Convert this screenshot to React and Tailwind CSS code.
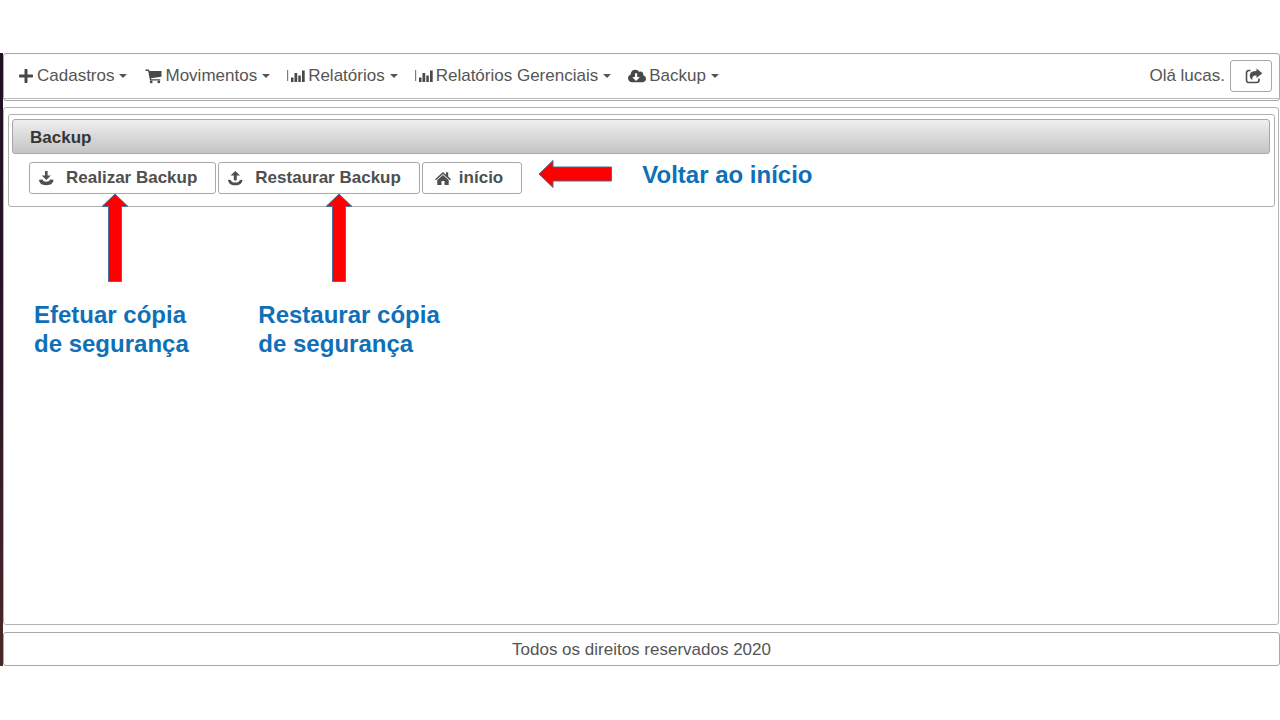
import React from "react";
import { FaPlus, FaCloudDownloadAlt } from "react-icons/fa";

function CartIcon() {
  return (
    <svg width="17" height="16" viewBox="0 0 17 16" fill="currentColor" aria-hidden="true">
      <path d="M0.500 1.500h3.400l.6 1.500H16.500v5.800L6 10.200l.2 1.100h9v1.300H5L3.200 3H0.500z" />
      <circle cx="6.200" cy="13.900" r="1.400" />
      <circle cx="13.800" cy="13.900" r="1.400" />
    </svg>
  );
}

function BarsIcon() {
  return (
    <svg width="18" height="16" viewBox="0 0 18 16" fill="currentColor" aria-hidden="true">
      <path d="M0 2h1.200v11H0z" opacity="0.7" />
      <path d="M4 9.500h2.500V14H4zM7.500 5h2.700v9H7.500zM11.300 7.500h2.500V14h-2.500zM15 2.500h2.700V14H15z" />
    </svg>
  );
}

function TrayDownIcon() {
  return (
    <svg width="16" height="16" viewBox="0 0 16 16" fill="currentColor" aria-hidden="true">
      <path d="M7 1h2.600v4.600h3.200L8.300 10 3.800 5.600H7z" />
      <path d="M1 9.800l3.500-.3c.6 1.600 2 2.200 3.800 2.200s3.200-.6 3.800-2.200l3.400.3c-.4 3.600-2.400 5.400-7.200 5.400S1.400 13.400 1 9.800z" />
    </svg>
  );
}

function TrayUpIcon() {
  return (
    <svg width="16" height="16" viewBox="0 0 16 16" fill="currentColor" aria-hidden="true">
      <path d="M8.300 1l4.800 4.600H9.800v4c0 .6-.6 1-1.500 1s-1.500-.4-1.500-1v-4H3.500z" />
      <path d="M1 9.800l2.800.2c.6 1.900 2 2.600 4.500 2.600s3.900-.7 4.500-2.600l2.700-.2c-.4 3.700-2.600 5.500-7.200 5.500S1.400 13.500 1 9.800z" />
    </svg>
  );
}

function HomeIcon() {
  return (
    <svg width="16" height="16" viewBox="0 0 16 16" fill="currentColor" aria-hidden="true">
      <path d="M8 2l3 2.700V2.300h2.200v4.300L16 9.200l-1 1.100-7-6.200-7 6.200-1-1.100z" />
      <path d="M8 4.900l5.700 5v5.100H9.500v-4H6.500v4H2.300V9.900z" />
    </svg>
  );
}

function ShareIcon() {
  return (
    <svg width="18" height="16" viewBox="0 0 18 16" aria-hidden="true">
      <path d="M5.500 2.500H4Q1.500 2.500 1.500 5v7.200Q1.500 14.500 4 14.500h7.500q2.500 0 2.500-2.500v-1.500" fill="none" stroke="currentColor" strokeWidth="1.600" />
      <path d="M11.500 0.500l5.800 4.800-5.800 4.800V7.600C8.500 7.300 7 8.500 7.200 12 5 10.400 4.200 8.200 5 6 6 3.600 8.300 2.900 11.500 3z" fill="currentColor" />
    </svg>
  );
}

const menus = [
  { label: "Cadastros", icon: <FaPlus size={16} /> },
  { label: "Movimentos", icon: <CartIcon /> },
  { label: "Relatórios", icon: <BarsIcon /> },
  { label: "Relatórios Gerenciais", icon: <BarsIcon /> },
  { label: "Backup", icon: <FaCloudDownloadAlt size={18} /> },
];

function MenuButton({ label, icon }) {
  return (
    <button type="button" aria-haspopup="menu" className="flex items-center text-[#555]">
      <span className="mr-[3px] flex w-[18px] justify-end text-[#484848]">{icon}</span>
      <span>{label}</span>
      <span className="ml-[5px] border-x-4 border-t-4 border-x-transparent border-t-[#555]" />
    </button>
  );
}

function UpArrow() {
  return (
    <svg width="28" height="90" viewBox="0 0 28 90" className="mx-auto" aria-hidden="true">
      <path d="M14 1L27 13.500H20.500V88.500H7.500V13.500H1z" fill="#f00" stroke="#41719c" strokeWidth="1" />
    </svg>
  );
}

function LeftArrow() {
  return (
    <svg width="75" height="30" viewBox="0 0 75 30" aria-hidden="true">
      <path d="M1 15L15 1.500V8H73.500V22H15V28.500z" fill="#f00" stroke="#41719c" strokeWidth="1" />
    </svg>
  );
}

const actionClass =
  "flex h-8 items-center rounded-[3px] border border-[#a8a8a8] bg-white pr-[18px] font-bold text-[#4f4f4f] whitespace-nowrap";
const noteClass = "text-2xl leading-[29px] font-bold text-[#0f70b7] whitespace-nowrap";

export default function App() {
  return (
    <div className="flex min-h-screen flex-col bg-white pt-[53px] pb-[54px] font-['Liberation_Sans',Arial,sans-serif] text-[17px] leading-5 text-[#555]">
      <div className="flex flex-1 bg-[linear-gradient(#1e1220,#2c1426_50%,#4a2828)] pl-[3px]">
        <div className="flex min-w-0 flex-1 flex-col bg-white">
          <header className="rounded-[3px] border border-[#a8a8a8] pb-px">
            <div className="flex items-center justify-between border-b border-[#bbb] pr-[7px] pl-3">
              <nav className="flex items-center gap-[17px]">
                {menus.map((m) => (
                  <MenuButton key={m.label} {...m} />
                ))}
              </nav>
              <div className="flex h-11 items-center gap-[5px]">
                <span>Olá lucas.</span>
                <button
                  type="button"
                  aria-label="Sair"
                  className="flex h-8 w-[42px] items-center justify-center rounded-[3px] border border-[#a8a8a8] pl-[5px] text-[#4f4f4f]"
                >
                  <ShareIcon />
                </button>
              </div>
            </div>
          </header>

          <main className="mt-[6px] mr-px flex-1 rounded-[3px] border border-[#b4b4b4] pt-[6px] pr-[3px] pl-1">
            <section className="rounded-[3px] border border-[#b0b0b0] pt-1 pr-1 pb-3 pl-[3px]">
              <h1 className="rounded-[3px] border border-[#a8a8a8] bg-linear-to-b from-[#efefef] to-[#c4c4c4] px-[17px] pt-2 pb-[5px] font-bold text-[#363636]">
                Backup
              </h1>
              <div className="mt-2 ml-[17px] flex gap-[2px]">
                <div className="relative">
                  <button type="button" className={`${actionClass} gap-3 pl-2`}>
                    <TrayDownIcon />
                    Realizar Backup
                  </button>
                  <div className="absolute top-full left-[5px] -mt-px">
                    <div className="w-[162px]">
                      <UpArrow />
                    </div>
                    <p className={`${noteClass} mt-[17px]`}>
                      Efetuar cópia
                      <br />
                      de segurança
                    </p>
                  </div>
                </div>
                <div className="relative">
                  <button type="button" className={`${actionClass} gap-3 pl-2`}>
                    <TrayUpIcon />
                    Restaurar Backup
                  </button>
                  <div className="absolute top-full left-10 -mt-px">
                    <div className="w-[162px]">
                      <UpArrow />
                    </div>
                    <p className={`${noteClass} mt-[17px]`}>
                      Restaurar cópia
                      <br />
                      de segurança
                    </p>
                  </div>
                </div>
                <div className="relative">
                  <button type="button" className={`${actionClass} gap-2 pl-3`}>
                    <HomeIcon />
                    início
                  </button>
                  <div className="absolute -top-[3px] left-full ml-4 flex items-center gap-[29px]">
                    <LeftArrow />
                    <p className={noteClass}>Voltar ao início</p>
                  </div>
                </div>
              </div>
            </section>
          </main>

          <footer className="mt-[7px] rounded-[3px] border border-[#a8a8a8] pt-[7px] pb-[5px] text-center">
            Todos os direitos reservados 2020
          </footer>
        </div>
      </div>
    </div>
  );
}
